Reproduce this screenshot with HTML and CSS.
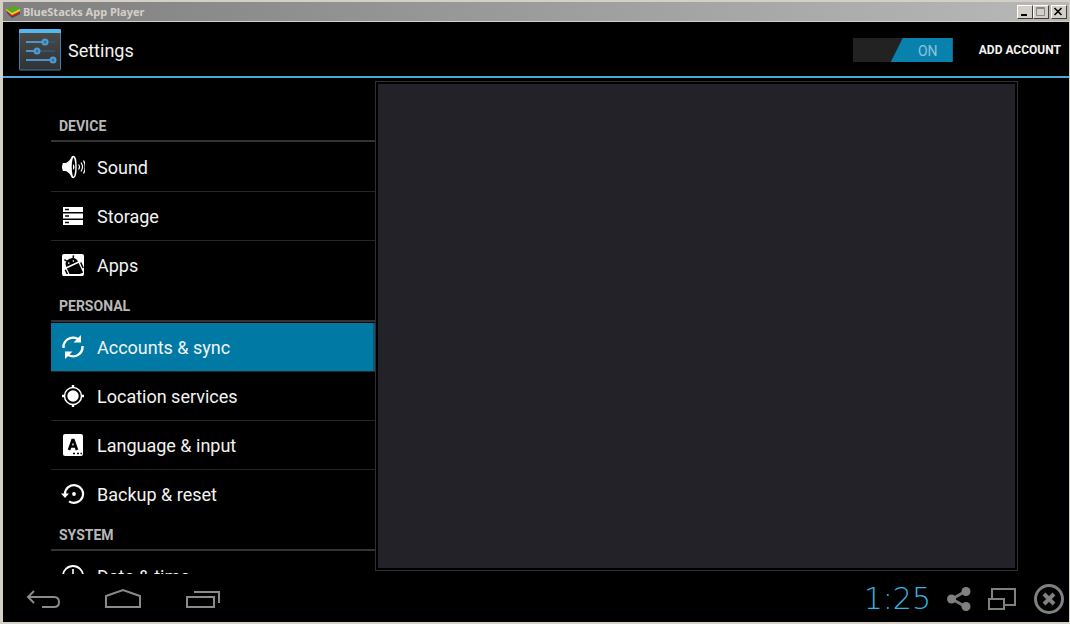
FILE: index.html
```html
<!DOCTYPE html>
<html lang="en">
<head>
	<meta charset="utf-8">
	<meta name="viewport" content="width=device-width, initial-scale=1">
	<title>BlueStacks App Player</title>
	<link rel="stylesheet" href="styles.css">
</head>
<body>
	<div class="window">
		<div class="title-bar">
			<svg class="title-logo" viewBox="0 0 16 14">
				<path d="M2 8l5 5 8-4V7H2z" fill="#2a3f7c"/>
				<path d="M1 6l6 6 8-4V6H1z" fill="#c22a1c"/>
				<path d="M1 5l6 5 8-4V4H1z" fill="#f2d22c"/>
				<path d="M1 4l8-3 6 3-8 4z" fill="#57a823"/>
			</svg>
			<span class="title-text">BlueStacks App Player</span>
			<div class="window-buttons">
				<button class="win-btn" aria-label="Minimize"><svg viewBox="0 0 12 11"><path d="M3 8h6v2H3z"/></svg></button>
				<button class="win-btn" aria-label="Maximize"><svg viewBox="0 0 12 11"><path d="M2.5 1.5h8v8h-8zM2 2.5h9" fill="none" stroke="#888"/></svg></button>
				<button class="win-btn close" aria-label="Close"><svg viewBox="0 0 12 11"><path d="M2.5 2l7 7M9.5 2l-7 7" fill="none" stroke="#000" stroke-width="1.6"/></svg></button>
			</div>
		</div>

		<header class="header">
			<svg class="settings-icon" viewBox="0 0 44 44">
				<defs>
					<linearGradient id="tile" x2="0" y2="1"><stop stop-color="#4b4b4b"/><stop offset="1" stop-color="#303235"/></linearGradient>
				</defs>
				<rect x="1.5" y="2" width="41" height="40" rx="1" fill="url(#tile)" stroke="#3f7fae"/>
				<path d="M1 5V2q0-1 1-1h40q1 0 1 1v3z" fill="#55b7ee"/>
				<g stroke="#33526b" stroke-width="2"><path d="M8 14h29M8 23h29M8 32h29"/></g>
				<g stroke="#4f94c8" stroke-width="2"><path d="M8 14h17M8 23h10M8 32h25"/></g>
				<g fill="#356f9b" stroke="#4f9ad0" stroke-width="2"><circle cx="27" cy="14" r="2.5"/><circle cx="19" cy="23" r="2.5"/><circle cx="35" cy="32" r="2.5"/></g>
			</svg>
			<h1>Settings</h1>
			<label class="switch">
				<input type="checkbox" checked aria-label="Accounts and sync">
				<span class="switch-thumb">ON</span>
			</label>
			<button class="add-account">ADD ACCOUNT</button>
		</header>

		<main class="content">
			<nav class="menu">
				<h2>DEVICE</h2>
				<ul>
					<li><a href="#sound">
						<svg viewBox="0 0 24 24">
							<path d="M2 8h3q4-2 6-7h2v22h-2q-2-5-6-7H2q-2-4 0-8z" fill="#fff"/>
							<ellipse cx="12.5" cy="12" rx="2.5" ry="10.5" fill="#000" stroke="#fff" stroke-width="1.4"/>
							<path d="M12 9q3 3 0 6z" fill="#fff"/>
							<path d="M17.5 9.5q2 2.5 0 5M20 7.500q3 4.500 0 9M22.500 5.500q3.500 6.500 0 13" fill="none" stroke="#fff" stroke-width="1.2"/>
						</svg>Sound</a></li>
					<li><a href="#storage">
						<svg viewBox="0 0 24 24">
							<path d="M2 3h20v5H2zM2 9.5h20v5H2zM2 16h20v5H2z" fill="#fff"/>
							<path d="M4 5.5h4M4 12h4M4 18.5h4" stroke="#000" stroke-width="1.4"/>
						</svg>Storage</a></li>
					<li><a href="#apps">
						<svg viewBox="0 0 24 24">
							<rect x="1" y="1" width="22" height="22" rx="2" fill="#fff"/>
							<g transform="rotate(-25 12 12)">
								<path d="M5 11q0-6 6.500-6T18 11z"/>
								<path d="M5 12.500h13V23H7q-2 0-2-2z"/>
								<path d="M8 6L6.500 3.500M15 6l1.500-2.500M3 13v6M20 13v6" stroke="#000" stroke-width="1.5"/>
								<circle cx="9" cy="8.5" r=".8" fill="#fff"/><circle cx="14" cy="8.5" r=".8" fill="#fff"/>
							</g>
							<path d="M2 22h20" stroke="#fff" stroke-width="2"/>
						</svg>Apps</a></li>
				</ul>
				<h2>PERSONAL</h2>
				<ul>
					<li><a class="selected" href="#accounts">
						<svg viewBox="0 0 24 24">
							<path d="M2.5 13C2 6 9 0 17 4M21.5 11C22 18 15 24 7 20" fill="none" stroke="#fff" stroke-width="2.4"/>
							<path d="M20 0v7.5h-7.5zM4 24v-7.5h7.5z" fill="#fff"/>
						</svg>Accounts &amp; sync</a></li>
					<li><a href="#location">
						<svg viewBox="0 0 24 24">
							<circle cx="12" cy="12" r="8.5" fill="none" stroke="#fff" stroke-width="1.5"/>
							<circle cx="12" cy="12" r="5.7" fill="#fff"/>
							<path d="M12 1v3M12 20v3M1 12h3M20 12h3" stroke="#fff" stroke-width="2.4"/>
						</svg>Location services</a></li>
					<li><a href="#language">
						<svg viewBox="0 0 24 24">
							<rect x="2" y="1" width="20" height="22" rx="2" fill="#fff"/>
							<path d="M8 17l3.5-10h1L16 17M9.5 13.5h5" fill="none" stroke="#000" stroke-width="2.6"/>
							<path d="M12 20.5h2M16 20.5h2M19.5 20.5h1.5" stroke="#000" stroke-width="1.6"/>
						</svg>Language &amp; input</a></li>
					<li><a href="#backup">
						<svg viewBox="0 0 24 24">
							<path d="M4 12a9 8.8 0 1 1 4 7.3" fill="none" stroke="#fff" stroke-width="2.2"/>
							<path d="M0 11.5h8l-4 4.5z" fill="#fff"/>
							<circle cx="13" cy="12" r="1.9" fill="#fff"/>
						</svg>Backup &amp; reset</a></li>
				</ul>
				<h2>SYSTEM</h2>
				<ul>
					<li><a href="#date">
						<svg viewBox="0 0 24 24">
							<circle cx="12" cy="12" r="10" fill="none" stroke="#fff" stroke-width="1.8"/>
							<path d="M12 5v8l4 3" fill="none" stroke="#fff" stroke-width="1.6"/>
						</svg>Date &amp; time</a></li>
				</ul>
			</nav>
			<section class="panel"></section>
		</main>

		<footer class="system-bar">
			<div class="nav-keys">
				<button aria-label="Back"><svg width="36" height="24" viewBox="0 0 36 24"><path d="M9 4L3 10l6 6M3 10h26q5 0 5 5t-5 5H17" fill="none" stroke="#8a8a8a" stroke-width="2"/></svg></button>
				<button aria-label="Home"><svg width="38" height="24" viewBox="0 0 38 24"><path d="M2 20V9l17-6 17 6v11z" fill="none" stroke="#8a8a8a" stroke-width="2"/></svg></button>
				<button aria-label="Recent apps"><svg width="36" height="24" viewBox="0 0 36 24"><path d="M2 10h27v10H2zM9 5h25v11" fill="none" stroke="#8a8a8a" stroke-width="2"/></svg></button>
			</div>
			<time class="clock">1:25</time>
			<div class="tools">
				<button aria-label="Share"><svg width="24" height="24" viewBox="0 0 24 24"><path d="M19 4L5 12l14 8" fill="none" stroke="#777" stroke-width="3"/><g fill="#808080"><circle cx="19" cy="4.5" r="4.5"/><circle cx="4.5" cy="12" r="4.5"/><circle cx="19" cy="19.5" r="4.5"/></g></svg></button>
				<button aria-label="Toggle full screen"><svg width="30" height="24" viewBox="0 0 30 24"><path d="M5 11V2h23v16H18M2 12h15v10H2z" fill="none" stroke="#808080" stroke-width="2"/></svg></button>
				<button aria-label="Close app"><svg width="32" height="32" viewBox="0 0 32 32"><circle cx="16" cy="16" r="13.5" fill="none" stroke="#808080" stroke-width="3"/><path d="M11 11l10 10M21 11L11 21" stroke="#808080" stroke-width="4"/></svg></button>
			</div>
		</footer>
	</div>
</body>
</html>
```
FILE: styles.css
```css
*{
	margin: 0;
	padding: 0;
	box-sizing: border-box;
}
body{
	background: #000;
	color: #f3f3f3;
	font-family: Roboto, "Liberation Sans", sans-serif;
}
button{
	background: none;
	border: none;
	color: inherit;
	font-family: inherit;
	cursor: pointer;
}
svg{
	display: block;
	flex: none;
}
.window{
	height: 100vh;
	display: flex;
	flex-direction: column;
	border: 1px solid #d4d0c8;
	border-width: 2px 1px 2px 3px;
}

/* title bar */
.title-bar{
	height: 20px;
	display: flex;
	align-items: center;
	gap: 2px;
	padding: 0 2px;
	background: linear-gradient(to right, #808080, #b8b8b8);
	border-bottom: 1px solid #d4d0c8;
	color: #d4d0c8;
}
.title-logo{
	width: 16px;
	height: 14px;
}
.title-text{
	flex: 1;
	font: bold 11px/18px "Noto Sans", sans-serif;
}
.window-buttons{
	display: flex;
}
.win-btn{
	width: 16px;
	height: 14px;
	background: #d4d0c8;
	border: 1px solid;
	border-color: #fff #404040 #404040 #fff;
}
.win-btn svg{
	width: 12px;
	height: 11px;
}
.win-btn.close{
	margin-left: 2px;
}

/* action bar */
.header{
	height: 56px;
	display: flex;
	align-items: center;
	padding: 2px 8px 0 15px;
	border-bottom: 2px solid #4ba9da;
}
.settings-icon{
	width: 44px;
	height: 44px;
}
.header h1{
	flex: 1;
	margin-left: 6px;
	font-size: 18px;
	font-weight: 400;
}
.switch{
	display: grid;
	width: 100px;
	height: 24px;
	background: #222;
	cursor: pointer;
}
.switch input{
	grid-area: 1 / 1;
	appearance: none;
}
.switch-thumb{
	grid-area: 1 / 1;
	justify-self: end;
	width: 62px;
	height: 24px;
	padding-left: 12px;
	background: #0881ac;
	clip-path: polygon(12px 0, 100% 0, 100% 100%, 0 100%);
	color: #8cc5dc;
	font-size: 14px;
	line-height: 26px;
	text-align: center;
}
.add-account{
	margin-left: 26px;
	font-size: 12px;
	font-weight: 700;
}

/* settings list and detail pane */
.content{
	flex: 1;
	min-height: 0;
	display: flex;
	padding: 0 51px 0 48px;
}
.menu{
	flex: 0 0 324px;
	padding-top: 31px;
	overflow: hidden;
}
.menu h2{
	height: 33px;
	padding: 3px 8px 0;
	border-bottom: 2px solid #333;
	color: #b8b8b8;
	font-size: 14px;
	font-weight: 700;
	line-height: 28px;
}
.menu ul{
	list-style: none;
}
.menu li{
	border-top: 1px solid #262626;
}
.menu li:first-child{
	border-color: transparent;
}
.menu a{
	height: 48px;
	display: flex;
	align-items: center;
	gap: 12px;
	padding-left: 10px;
	color: #f3f3f3;
	font-size: 18px;
	text-decoration: none;
}
.menu a svg{
	width: 24px;
	height: 24px;
}
.menu a.selected{
	background: #007aa5;
	border-right: 2px solid #0d5a78;
}
.panel{
	flex: 1;
	margin: 3px 0;
	padding: 2px;
	background: #232228 content-box;
	border: 1px solid #303030;
}

/* bottom bar */
.system-bar{
	height: 48px;
	display: flex;
	align-items: center;
	padding: 1px 4px 0 22px;
}
.nav-keys{
	flex: 1;
	display: flex;
	gap: 43px;
}
.clock{
	margin-right: 16px;
	color: #33b5e5;
	font: 200 30px/32px "DejaVu Sans", sans-serif;
}
.tools{
	display: flex;
	align-items: center;
	gap: 16px;
}
```
